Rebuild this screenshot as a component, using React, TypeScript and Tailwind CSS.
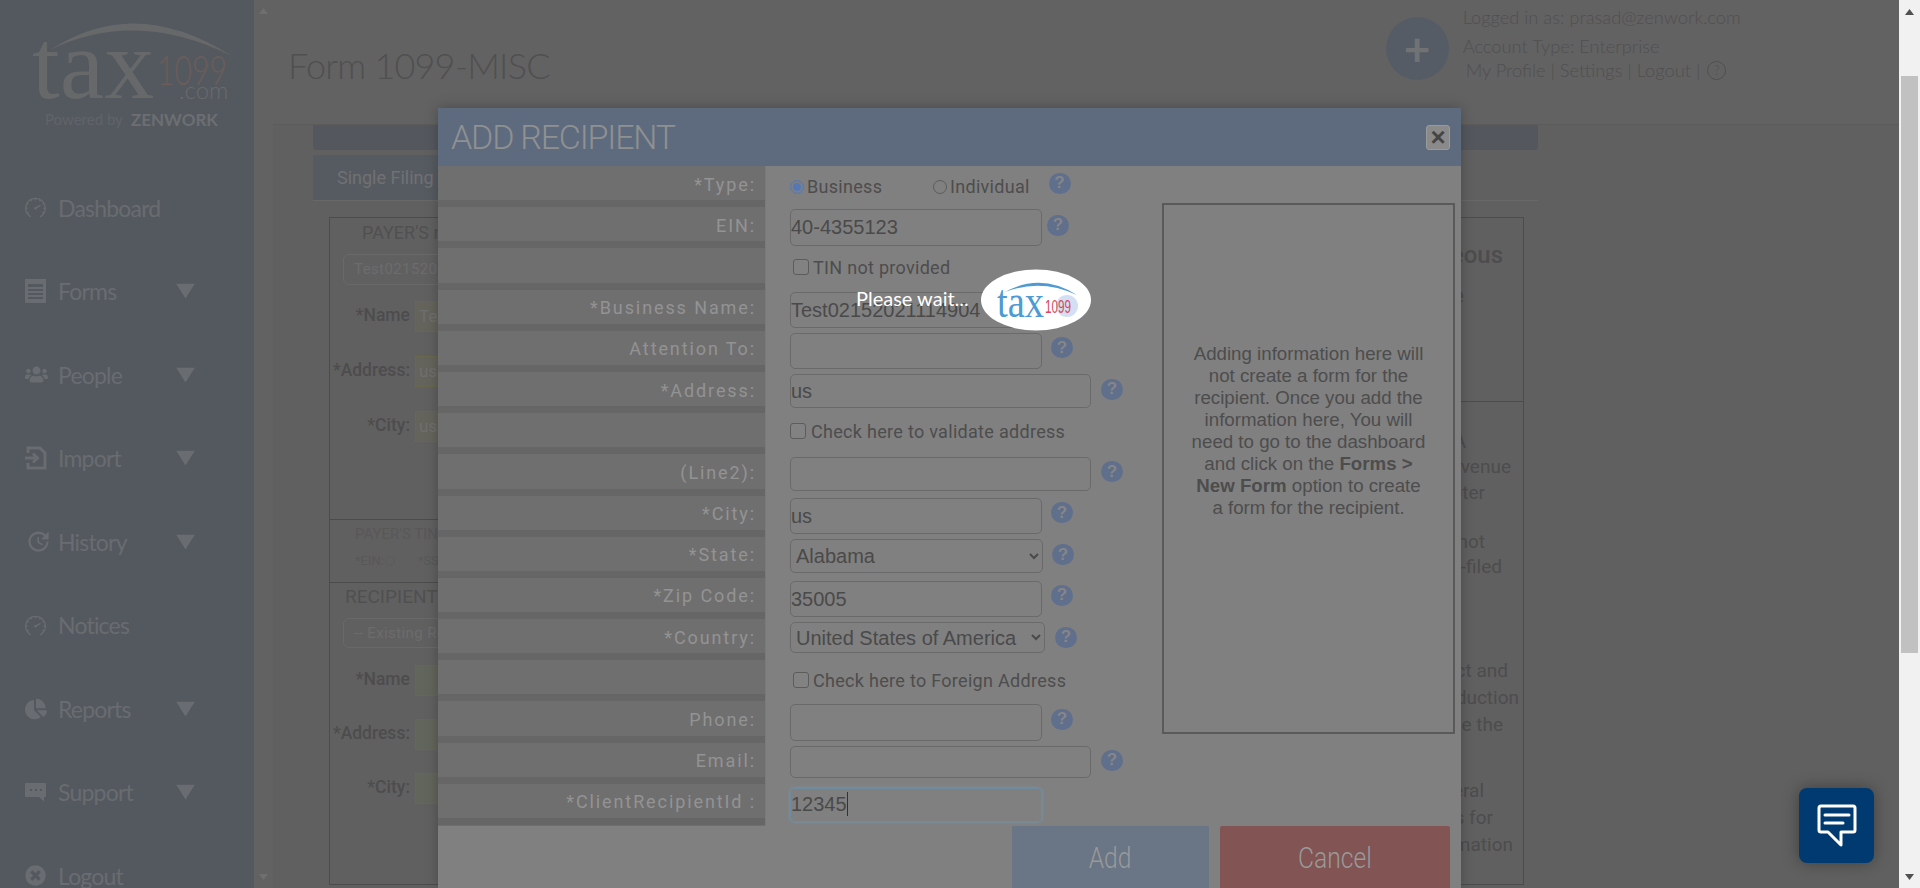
import React from "react";
import { FaUsers, FaChartPie, FaTimesCircle } from "react-icons/fa";
import { MdUpdate } from "react-icons/md";
import { SlSpeedometer } from "react-icons/sl";

const inputBase =
  "block border border-[#6a6a6a] rounded-[5px] bg-transparent font-['Liberation_Sans',sans-serif] text-[20px] text-[#4a4a4a] outline-none";

const labels = [
  "*Type:",
  "EIN:",
  "",
  "*Business Name:",
  "Attention To:",
  "*Address:",
  "",
  "(Line2):",
  "*City:",
  "*State:",
  "*Zip Code:",
  "*Country:",
  "",
  "Phone:",
  "Email:",
  "*ClientRecipientId :",
];

const topLines = [
  { text: "Miscellaneous", cls: "pr-[20px] text-[24px] font-medium" },
  { text: "Income", cls: "mt-[15px] pr-[59px] text-[22px]" },
];

const lowerLines = [
  { text: "FATCA", cls: "pr-[57px] text-[20px]" },
  { text: "Internal Revenue", cls: "pr-[12px] text-[19px]" },
  { text: "Service Center", cls: "pr-[38px] text-[19px]" },
  { text: "File with Form 1096 not", cls: "mt-[23px] pr-[38px] text-[19px]" },
  { text: "if e-filed", cls: "-mt-px pr-[21px] text-[19px]" },
  { text: "Direct sales contract and", cls: "mt-[78px] pr-[15px] text-[19px]" },
  { text: "for reproduction", cls: "mt-px pr-[4px] text-[19px]" },
  { text: "Instructions see the", cls: "mt-px pr-[20px] text-[19px]" },
  { text: "General", cls: "mt-[40px] pr-[39px] text-[19px]" },
  { text: "Instructions for", cls: "mt-px pr-[30px] text-[19px]" },
  { text: "Certain Information", cls: "mt-px pr-[10px] text-[19px]" },
];

function Help({ cls }: { cls: string }) {
  return (
    <span
      className={
        "flex h-[21px] w-[22px] shrink-0 items-center justify-center rounded-full bg-[#5f6f8c] font-['Liberation_Sans',sans-serif] text-[17px] font-bold text-[#868686] " +
        cls
      }
    >
      ?
    </span>
  );
}

function Field({ cls, width, value, help }: { cls: string; width: string; value?: string; help: string }) {
  return (
    <div className={"flex items-center " + cls}>
      <input readOnly value={value ?? ""} className={inputBase + " h-full " + width} />
      <Help cls={help} />
    </div>
  );
}

function Check({ cls, text, box }: { cls: string; text: string; box: string }) {
  return (
    <label className={"flex h-[16px] items-center font-['Roboto',sans-serif] text-[18px] tracking-[0.3px] text-[#4d4d4d] " + cls}>
      <input type="checkbox" readOnly className={"h-[16px] w-[16px] appearance-none rounded-[3px] border border-[#5c5c5c] bg-[#828282] " + box} />
      {text}
    </label>
  );
}

function Triangle() {
  return (
    <svg className="absolute left-[176px] top-1/2 -translate-y-1/2" width="19" height="15" viewBox="0 0 19 15">
      <path d="M0 0H19L9.5 15Z" fill="#696c70" />
    </svg>
  );
}

function FormsIcon() {
  return (
    <svg width="22" height="24" viewBox="0 0 22 24" fill="#696c70">
      <path d="M0 0H21V24H0ZM3 5V8H18V5ZM3 10V12H18V10ZM3 14V16H18V14ZM3 18V20H18V18Z" fillRule="evenodd" />
    </svg>
  );
}

function ImportIcon() {
  return (
    <svg width="22" height="24" viewBox="0 0 22 24" fill="none" stroke="#696c70" strokeWidth="3">
      <path d="M3 7V2H15L20 7V22H3V17" />
      <path d="M0 12H10" />
      <path d="M8 7.5L12.5 12L8 16.5" />
    </svg>
  );
}

function SupportIcon() {
  return (
    <svg width="21" height="19" viewBox="0 0 21 19" fill="#696c70">
      <path d="M1 0H20Q21 0 21 1V13Q21 14 20 14H19V18.5L14 14H1Q0 14 0 13V1Q0 0 1 0ZM5 6V8H7V6ZM10 6V8H12V6ZM15 6V8H17V6Z" fillRule="evenodd" />
    </svg>
  );
}

const navItems = [
  { label: "Dashboard", icon: <SlSpeedometer size={21} />, arrow: false },
  { label: "Forms", icon: <FormsIcon />, arrow: true },
  { label: "People", icon: <FaUsers size={23} />, arrow: true },
  { label: "Import", icon: <ImportIcon />, arrow: true },
  { label: "History", icon: <MdUpdate size={27} />, arrow: true },
  { label: "Notices", icon: <SlSpeedometer size={21} />, arrow: false },
  { label: "Reports", icon: <FaChartPie size={22} />, arrow: true },
  { label: "Support", icon: <SupportIcon />, arrow: true },
  { label: "Logout", icon: <FaTimesCircle size={21} />, arrow: false },
];

function SideLogo() {
  return (
    <svg width="254" height="140" viewBox="0 0 254 140" className="block">
      <path d="M50 50Q135 -6 232 56Q135 8 50 50Z" fill="#666869" />
      <text x="32" y="98" fontFamily="Liberation Serif" fontSize="100" fill="#666869">tax</text>
      <text x="157" y="85" fontFamily="Lato" fontWeight="300" fontSize="41" fill="#6b5d59" textLength="70" lengthAdjust="spacingAndGlyphs">1099</text>
      <text x="179" y="99" fontFamily="Lato" fontWeight="300" fontSize="24" fill="#696b6d">.com</text>
      <text x="45" y="125" fontFamily="Lato" fontSize="15" fill="#606468">Powered by</text>
      <text x="131" y="126" fontFamily="Lato" fontWeight="700" fontSize="17" fill="#6c6f72" textLength="87">ZENWORK</text>
    </svg>
  );
}

function LoaderLogo() {
  return (
    <svg width="110" height="62" viewBox="0 0 110 62" className="block">
      <ellipse cx="55" cy="31" rx="55" ry="30.5" fill="#ffffff" />
      <circle cx="86" cy="37" r="11" fill="#d3dff2" />
      <path d="M24 23Q60 3 96 26Q60 9 24 23Z" fill="#4d9bd2" />
      <text x="16" y="48" fontFamily="Liberation Serif" fontSize="46" fill="#4d9bd2" textLength="47" lengthAdjust="spacingAndGlyphs">tax</text>
      <text x="64" y="44" fontFamily="Liberation Sans" fontSize="18" fill="#d9475c" textLength="26" lengthAdjust="spacingAndGlyphs">1099</text>
    </svg>
  );
}

export default function App() {
  return (
    <div className="relative flex h-[888px] w-[1920px] overflow-hidden bg-[#606060] font-['Lato',sans-serif]">
      <aside className="w-[254px] shrink-0 bg-[#54595f]">
        <SideLogo />
        <nav className="mt-[26px]">
          {navItems.map((item) => (
            <div key={item.label} className="relative flex h-[83.5px] items-center pl-[25px] text-[#696c70]">
              <span className="flex w-[33px] shrink-0 items-center">{item.icon}</span>
              <span className="text-[23px] tracking-[-0.8px]">{item.label}</span>
              {item.arrow && <Triangle />}
            </div>
          ))}
        </nav>
      </aside>

      <div className="flex w-[19px] shrink-0 flex-col items-center justify-between bg-[#626262] py-[8px] text-[#6f6f6f]">
        <svg width="9" height="6" viewBox="0 0 9 6"><path d="M0 6H9L4.5 0Z" fill="currentColor" /></svg>
        <svg width="9" height="6" viewBox="0 0 9 6"><path d="M0 0H9L4.5 6Z" fill="currentColor" /></svg>
      </div>

      <main className="min-w-0 flex-1">
        <header className="flex h-[125px] border-b border-[#5c5c5c] bg-[#626262] text-[#505050]">
          <h1 className="ml-[15px] mt-[41px] text-[36px] font-light leading-[48px] tracking-[-0.8px]">Form 1099-MISC</h1>
          <div className="ml-[836px] mt-[17px] flex h-[63px] w-[63px] items-center justify-center rounded-full bg-[#565c66] text-[46px] font-bold leading-none text-[#707274]">
            +
          </div>
          <div className="ml-[14px] text-[18.3px] font-light leading-[24px]">
            <p className="mt-[5px]">Logged in as: prasad@zenwork.com</p>
            <p className="mt-[5px]">Account Type: Enterprise</p>
            <p className="ml-[3px] flex items-center">
              My Profile | Settings | Logout |
              <span className="ml-[7px] flex h-[19px] w-[19px] items-center justify-center rounded-full border border-[#505050] text-[13px]">?</span>
            </p>
          </div>
        </header>

        <div className="ml-[40px] h-[25px] w-[1225px] rounded-b-[3px] bg-[#54585e]" />
        <div className="ml-[40px] mt-[5px] h-[46px] w-[1225px] border-b border-[#686868]">
          <div className="flex h-[45px] w-[200px] items-center bg-[#565b62] pl-[24px] font-['Roboto',sans-serif] text-[18px] text-[#707172]">
            Single Filing
          </div>
        </div>

        <section className="ml-[56px] mt-[16px] flex h-[668px] w-[1195px] border border-[#4c4c4c] font-['Roboto',sans-serif] text-[#4d4d4d]">
          <div className="w-[700px]">
            <div className="h-[302px] border-b border-[#4c4c4c] pt-[3px]">
              <p className="ml-[32px] text-[18px] leading-[24px] text-[#505050]">PAYER'S name</p>
              <div className="ml-[13px] mt-[9px] flex h-[31px] w-[400px] items-center rounded-[6px] border border-[#696969] pl-[10px] text-[15px] tracking-[0.4px] text-[#6c6c6c]">
                Test02152021114904
              </div>
              {[
                { label: "*Name", value: "Test", top: "mt-[16px]" },
                { label: "*Address:", value: "us", top: "mt-[24px]" },
                { label: "*City:", value: "us", top: "mt-[24px]" },
              ].map((row) => (
                <div key={row.label} className={"flex h-[31px] " + row.top}>
                  <span className="w-[80px] text-right text-[17.5px] font-medium leading-[28px]">{row.label}</span>
                  <span className="ml-[5px] flex w-[300px] items-center border border-[#68684e] bg-[#64645c] pl-[3px] text-[17px] text-[#6f6f6f]">{row.value}</span>
                </div>
              ))}
            </div>
            <div className="h-[63px] border-b border-[#4c4c4c] pt-[2px] text-[#585858]">
              <p className="ml-[25px] text-[15px] leading-[24px]">PAYER'S TIN</p>
              <p className="ml-[25px] mt-[7px] flex items-center text-[13px] leading-[16px]">
                *EIN:
                <span className="ml-[1px] h-[10px] w-[10px] rounded-full border border-[#5c5c5c]" />
                <span className="ml-[23px]">*SSN:</span>
              </p>
            </div>
            <div className="pt-[1px]">
              <p className="ml-[15px] text-[19px] leading-[26px] text-[#505050]">RECIPIENT'S name</p>
              <div className="ml-[13px] mt-[8px] flex h-[30px] w-[400px] items-center rounded-[6px] border border-[#696969] pl-[10px] text-[15px] tracking-[0.4px] text-[#6c6c6c]">
                -- Existing Recipients --
              </div>
              {[
                { label: "*Name", top: "mt-[17px]" },
                { label: "*Address:", top: "mt-[23px]" },
                { label: "*City:", top: "mt-[23px]" },
              ].map((row) => (
                <div key={row.label} className={"flex h-[31px] " + row.top}>
                  <span className="w-[80px] text-right text-[17.5px] font-medium leading-[28px]">{row.label}</span>
                  <span className="ml-[5px] w-[300px] border border-[#626a50] bg-[#62655c]" />
                </div>
              ))}
            </div>
          </div>

          <div className="flex-1 text-right">
            <div className="h-[183px] pt-[24px]">
              {topLines.map((line) => (
                <p key={line.text} className={"h-[26px] leading-[26px] whitespace-nowrap " + line.cls}>{line.text}</p>
              ))}
            </div>
            <div className="border-t border-[#4c4c4c] pt-[26px]">
              {lowerLines.map((line) => (
                <p key={line.text} className={"h-[26px] leading-[26px] whitespace-nowrap " + line.cls}>{line.text}</p>
              ))}
            </div>
          </div>
        </section>
      </main>

      <div className="flex w-[21px] shrink-0 flex-col items-center bg-[#f1f1f1]">
        <svg className="mt-[9px]" width="9" height="6" viewBox="0 0 9 6"><path d="M0 6H9L4.5 0Z" fill="#505050" /></svg>
        <div className="mt-[61px] h-[577px] w-[17px] bg-[#c1c1c1]" />
        <svg className="mt-[221px]" width="9" height="6" viewBox="0 0 9 6"><path d="M0 0H9L4.5 6Z" fill="#505050" /></svg>
      </div>

      {/* modal */}
      <div className="absolute left-[438px] top-[108px] h-[780px] w-[1023px] overflow-hidden bg-[#808080] shadow-[0_0_12px_rgba(0,0,0,0.25)]">
        <div className="flex h-[58px] items-center justify-between bg-[#5e6a7e] pl-[13px] pr-[11px]">
          <h2 className="font-['Roboto',sans-serif] text-[34px] font-light tracking-[-1.2px] text-[#8f9191]">ADD RECIPIENT</h2>
          <button className="flex h-[25px] w-[24px] items-center justify-center rounded-[3px] border border-[#9a9a9a] bg-[#8a8a8a] font-['Liberation_Sans',sans-serif] text-[26px] font-bold leading-none text-[#454545]">
            ×
          </button>
        </div>

        <div className="flex h-[660px]">
          <div className="w-[327px] shrink-0 bg-[#6f6f6f] shadow-[1px_0_0_#7a7a7a]">
            {labels.map((label, i) => (
              <div
                key={i}
                className="flex h-[41.2px] items-center justify-end border-b-[7.6px] border-[#666666] pt-[2px] pr-[9px] font-['Roboto',sans-serif] text-[18px] tracking-[1.9px] text-[#939393]"
              >
                {label}
              </div>
            ))}
          </div>

          <div className="w-[397px] shrink-0 pl-[25px]">
            <div className="mt-[6px] flex h-[28px] items-center pt-[1px] font-['Roboto',sans-serif] text-[18px] tracking-[0.3px] text-[#4d4d4d]">
              <span className="h-[14px] w-[14px] rounded-full border border-[#5a7bb0] bg-[#5578b5] shadow-[inset_0_0_0_2px_#808080]" />
              <span className="ml-[3px] w-[126px]">Business</span>
              <span className="h-[14px] w-[14px] rounded-full border border-[#5c5c5c]" />
              <span className="ml-[3px]">Individual</span>
              <Help cls="ml-[19px] -mt-[7px]" />
            </div>
            <Field cls="mt-[9px] h-[37px]" width="w-[252px]" value="40-4355123" help="ml-[5px] -mt-[5px]" />
            <Check cls="mt-[13px]" text="TIN not provided" box="ml-[3px] mr-[4px]" />
            <Field cls="mt-[17px] h-[36px]" width="w-[252px]" value="Test02152021114904" help="invisible" />
            <Field cls="mt-[5px] h-[36px]" width="w-[252px]" help="ml-[9px] -mt-[7px]" />
            <Field cls="mt-[5px] h-[34px]" width="w-[301px]" value="us" help="ml-[10px] -mt-[4px]" />
            <Check cls="mt-[15px]" text="Check here to validate address" box="mr-[5px]" />
            <Field cls="mt-[18px] h-[34px]" width="w-[301px]" help="ml-[10px] -mt-[5px]" />
            <Field cls="mt-[7px] h-[36px]" width="w-[252px]" value="us" help="ml-[9px] -mt-[7px]" />
            <div className="mt-[5px] flex h-[34px] items-center">
              <select className={inputBase + " h-full w-[253px] pl-[1px]"}>
                <option>Alabama</option>
              </select>
              <Help cls="ml-[9px] -mt-[3px]" />
            </div>
            <Field cls="mt-[8px] h-[36px]" width="w-[252px]" value="35005" help="ml-[9px] -mt-[8px]" />
            <div className="mt-[5px] flex h-[31px] items-center">
              <select className={inputBase + " h-full w-[255px] pl-[1px]"}>
                <option>United States of America</option>
              </select>
              <Help cls="ml-[10px] -mt-[1px]" />
            </div>
            <Check cls="mt-[19px]" text="Check here to Foreign Address" box="ml-[3px] mr-[4px]" />
            <Field cls="mt-[16px] h-[37px]" width="w-[252px]" help="ml-[9px] -mt-[7px]" />
            <Field cls="mt-[5px] h-[32px]" width="w-[301px]" help="ml-[10px] -mt-[4px]" />
            <div className="mt-[10px] flex h-[34px] w-[252px] items-center rounded-[5px] border border-[#6f8ba0] pb-[2px] font-['Liberation_Sans',sans-serif] text-[20px] text-[#4a4a4a] shadow-[0_0_3px_#6f9bb8]">
              12345
              <span className="h-[24px] w-px bg-[#333333]" />
            </div>
          </div>

          <div className="mt-[37px] h-[531px] w-[293px] shrink-0 border-2 border-[#5a5a5a] px-[26px] pt-[138px] text-center font-['Liberation_Sans',sans-serif] text-[18.7px] leading-[22px] text-[#4d4d4d]">
            Adding information here will not create a form for the recipient. Once you add the information here, You will need to go to the dashboard and click on the <b>Forms &gt; New Form</b> option to create a form for the recipient.
          </div>
        </div>

        <div className="flex h-[62px] justify-end pr-[11px] font-['Roboto',sans-serif] text-[30px] font-light text-[#999a9a]">
          <button className="w-[197px] bg-[#6a7585]"><span className="inline-block scale-x-[0.82]">Add</span></button>
          <button className="ml-[11px] w-[230px] rounded-t-[2px] bg-[#825454]"><span className="inline-block scale-x-[0.82]">Cancel</span></button>
        </div>
      </div>

      {/* please wait */}
      <div className="absolute left-[856px] top-[269px] flex items-center">
        <span className="-mt-[5px] text-[20px] text-white">Please wait...</span>
        <span className="ml-[12px]">
          <LoaderLogo />
        </span>
      </div>

      {/* chat */}
      <button className="absolute left-[1799px] top-[788px] flex h-[75px] w-[75px] items-center justify-center rounded-[8px] bg-[#003a70] shadow-[0_0_16px_rgba(0,0,0,0.35)]">
        <svg width="40" height="44" viewBox="0 0 40 44" fill="none" stroke="#ffffff" strokeWidth="3" strokeLinejoin="round">
          <path d="M4 2H36Q38 2 38 4V26Q38 28 36 28H24V41L11 28H4Q2 28 2 26V4Q2 2 4 2Z" />
          <path d="M8 11H32M8 19H26" strokeLinecap="round" />
        </svg>
      </button>
    </div>
  );
}
